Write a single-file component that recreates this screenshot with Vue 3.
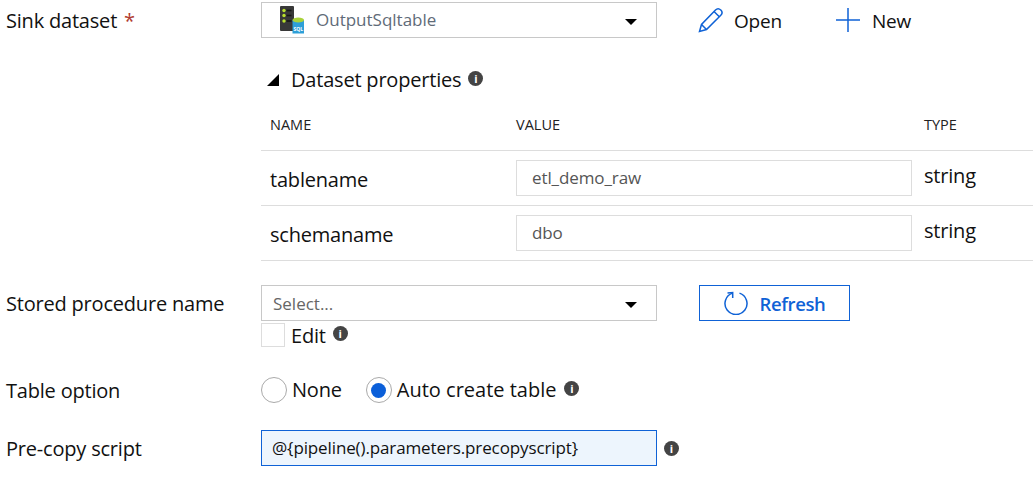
<template>
  <div class="page">
    <div class="row sink">
      <div class="label">Sink dataset <span class="req">*</span></div>
      <div class="content">
        <div class="select">
          <svg class="dbicon" width="24" height="28" viewBox="0 0 24 28">
            <rect x="0" y="0" width="14" height="25" rx="1" fill="#383838" />
            <circle cx="4" cy="4.500" r="1.700" fill="#b9e02e" />
            <circle cx="4" cy="9.500" r="1.700" fill="#b9e02e" />
            <circle cx="4" cy="15" r="1.700" fill="#b9e02e" />
            <rect x="6.500" y="3.700" width="5" height="1.600" fill="#161616" />
            <rect x="6.500" y="8.700" width="5" height="1.600" fill="#161616" />
            <rect x="6.500" y="14.200" width="5" height="1.600" fill="#161616" />
            <rect x="12.500" y="14" width="11.500" height="13.500" fill="#2d9fd8" />
            <ellipse cx="18.250" cy="14" rx="5.750" ry="2.500" fill="#a9d23a" />
            <text x="13.500" y="25" class="sqltext">SQL</text>
          </svg>
          <span class="selected">OutputSqltable</span>
          <span class="caret"></span>
        </div>
        <div class="action open">
          <svg width="26" height="26" viewBox="0 0 26 26" fill="none" stroke="#0f62d6" stroke-width="1.500">
            <path d="M1.500 24.500 L3.500 17.500 L17.500 3 C19 1.500 21 1.300 22.800 3 C24.500 4.800 24.300 6.800 22.800 8.300 L8.500 22.500 Z" />
            <path d="M16 4.500 L21.300 9.800 M3.500 17.500 L8.500 22.500" />
          </svg>
          <span class="action-text">Open</span>
        </div>
        <div class="action new">
          <svg width="24" height="24" viewBox="0 0 24 24" stroke="#0f62d6" stroke-width="1.500">
            <path d="M0 12 H24 M12 0 V24" />
          </svg>
          <span class="action-text">New</span>
        </div>
      </div>
    </div>

    <div class="props">
      <div class="props-head">
        <span class="tri"></span>
        <span>Dataset properties</span>
        <span class="info">i</span>
      </div>
      <div class="thead">
        <div class="c1">NAME</div>
        <div class="c2">VALUE</div>
        <div class="c3">TYPE</div>
      </div>
      <div v-for="p in params" :key="p.name" class="trow">
        <div class="c1 pname">{{ p.name }}</div>
        <div class="c2"><div class="input">{{ p.value }}</div></div>
        <div class="c3 ptype">{{ p.type }}</div>
      </div>
    </div>

    <div class="row proc">
      <div class="label">Stored procedure name</div>
      <div class="content">
        <div class="select">
          <span class="placeholder">Select...</span>
          <span class="caret"></span>
        </div>
        <button class="refresh">
          <svg width="24" height="24" viewBox="0 0 24 24" fill="none" stroke="#0f62d6" stroke-width="1.500">
            <path d="M8.500 2.100 A11 11 0 1 0 15.500 2.100" />
            <path d="M3.500 2 L8.700 1.500 V7" />
          </svg>
          Refresh
        </button>
      </div>
    </div>

    <div class="edit">
      <span class="check"></span>
      <span class="edit-text">Edit</span>
      <span class="info">i</span>
    </div>

    <div class="row option">
      <div class="label">Table option</div>
      <div class="content radios">
        <span class="radio"></span>
        <span class="rlabel none">None</span>
        <span class="radio on"></span>
        <span class="rlabel auto">Auto create table</span>
        <span class="info auto-info">i</span>
      </div>
    </div>

    <div class="row script">
      <div class="label">Pre-copy script</div>
      <div class="content">
        <div class="script-input">@{pipeline().parameters.precopyscript}</div>
        <span class="info">i</span>
      </div>
    </div>
  </div>
</template>

<script setup>
const params = [
  { name: 'tablename', value: 'etl_demo_raw', type: 'string' },
  { name: 'schemaname', value: 'dbo', type: 'string' }
]
</script>

<style>
html,
body {
  background: #fff;
  overflow: hidden;
}
</style>

<style scoped>
.page {
  width: 1033px;
  height: 478px;
  padding-top: 2px;
  box-sizing: border-box;
  font-family: "Open Sans", "Noto Sans", sans-serif;
  font-size: 20px;
  line-height: 26px;
  letter-spacing: -0.2px;
  color: #111;
  overflow: hidden;
}

.row {
  display: flex;
  align-items: center;
}

.label {
  width: 261px;
  padding: 2px 0 0 6px;
  box-sizing: border-box;
  flex: none;
}

.req {
  color: #b03a2e;
  margin-left: 2px;
}

.content {
  display: flex;
  align-items: center;
}

.select {
  width: 396px;
  height: 36px;
  box-sizing: border-box;
  border: 1px solid #c8c8c8;
  display: flex;
  align-items: center;
  padding-left: 11px;
  position: relative;
}

.dbicon {
  margin: 0 12px 0 7px;
}

.sqltext {
  font-size: 5px;
  font-weight: 700;
  fill: #fff;
  letter-spacing: 0;
}

.selected,
.placeholder {
  font-size: 17px;
  letter-spacing: 0;
}

.selected {
  color: #5f6b78;
}

.placeholder {
  color: #666;
  margin-top: 2px;
}

.caret {
  position: absolute;
  right: 19px;
  top: 16px;
  border-left: 6px solid transparent;
  border-right: 6px solid transparent;
  border-top: 6px solid #000;
}

.action {
  display: flex;
  align-items: center;
}

.action-text {
  font-size: 19px;
  padding-top: 2px;
}

.open {
  margin-left: 41px;
  gap: 10px;
}

.new {
  margin-left: 54px;
  gap: 12px;
}

.props {
  margin-left: 261px;
}

.props-head {
  display: flex;
  align-items: center;
  margin-top: 26px;
  height: 32px;
  padding-left: 6px;
}

.tri {
  width: 0;
  height: 0;
  border-left: 12px solid transparent;
  border-bottom: 12px solid #000;
  margin-right: 12px;
}

.info {
  width: 15px;
  height: 15px;
  border-radius: 50%;
  background: #444;
  color: #fff;
  font-size: 11px;
  font-weight: 700;
  line-height: 15px;
  text-align: center;
  letter-spacing: 0;
  margin-left: 7px;
  margin-top: -3px;
  flex: none;
}

.auto-info {
  margin-left: 8px;
}

.script .info {
  margin-top: 0;
}

.thead {
  display: flex;
  align-items: center;
  width: 772px;
  height: 44px;
  margin-top: 10px;
  padding-bottom: 6px;
  box-sizing: border-box;
  font-size: 14.500px;
  letter-spacing: 0;
  color: #222;
  font-weight: 500;
}

.c1 {
  width: 255px;
  padding-left: 9px;
  box-sizing: border-box;
  flex: none;
}

.c2 {
  width: 408px;
  flex: none;
}

.trow {
  display: flex;
  align-items: center;
  width: 772px;
  height: 54px;
  border-top: 1px solid #ddd;
}

.trow:last-child {
  border-bottom: 1px solid #ddd;
}

.input {
  width: 396px;
  height: 36px;
  box-sizing: border-box;
  border: 1px solid #ddd;
  padding-left: 15px;
  line-height: 34px;
  color: #555;
  font-size: 17px;
  letter-spacing: -0.100px;
}

.pname {
  padding-top: 4px;
}

.ptype {
  margin-top: -5px;
}

.proc {
  margin-top: 24px;
}

.refresh {
  margin-left: 42px;
  width: 151px;
  height: 36px;
  border: 1px solid #0f62d6;
  background: #fff;
  color: #0f62d6;
  font-family: inherit;
  font-size: 18.500px;
  font-weight: 600;
  letter-spacing: -0.400px;
  display: flex;
  align-items: center;
  justify-content: center;
  gap: 12px;
  padding: 0;
}

.edit {
  display: flex;
  align-items: center;
  margin: 2px 0 0 261px;
  height: 24px;
}

.edit-text {
  padding-top: 2px;
}

.check {
  width: 24px;
  height: 24px;
  box-sizing: border-box;
  border: 1px solid #ddd;
  margin-right: 6px;
}

.option {
  margin-top: 29px;
}

.radios {
  height: 26px;
}

.radio {
  width: 26px;
  height: 26px;
  box-sizing: border-box;
  border: 1px solid #aaa;
  border-radius: 50%;
  position: relative;
}

.radio.on::after {
  content: "";
  position: absolute;
  left: 4.500px;
  top: 4.500px;
  width: 15px;
  height: 15px;
  border-radius: 50%;
  background: #0b5fd9;
}

.rlabel {
  margin-left: 5px;
}

.auto {
  letter-spacing: 0;
}

.none {
  margin-right: 24px;
}

.script {
  margin-top: 26px;
}

.script-input {
  width: 396px;
  height: 36px;
  box-sizing: border-box;
  border: 1px solid #0f62d6;
  background: #edf5fd;
  padding-left: 10px;
  line-height: 34px;
  font-size: 17px;
  letter-spacing: -0.120px;
}
</style>
